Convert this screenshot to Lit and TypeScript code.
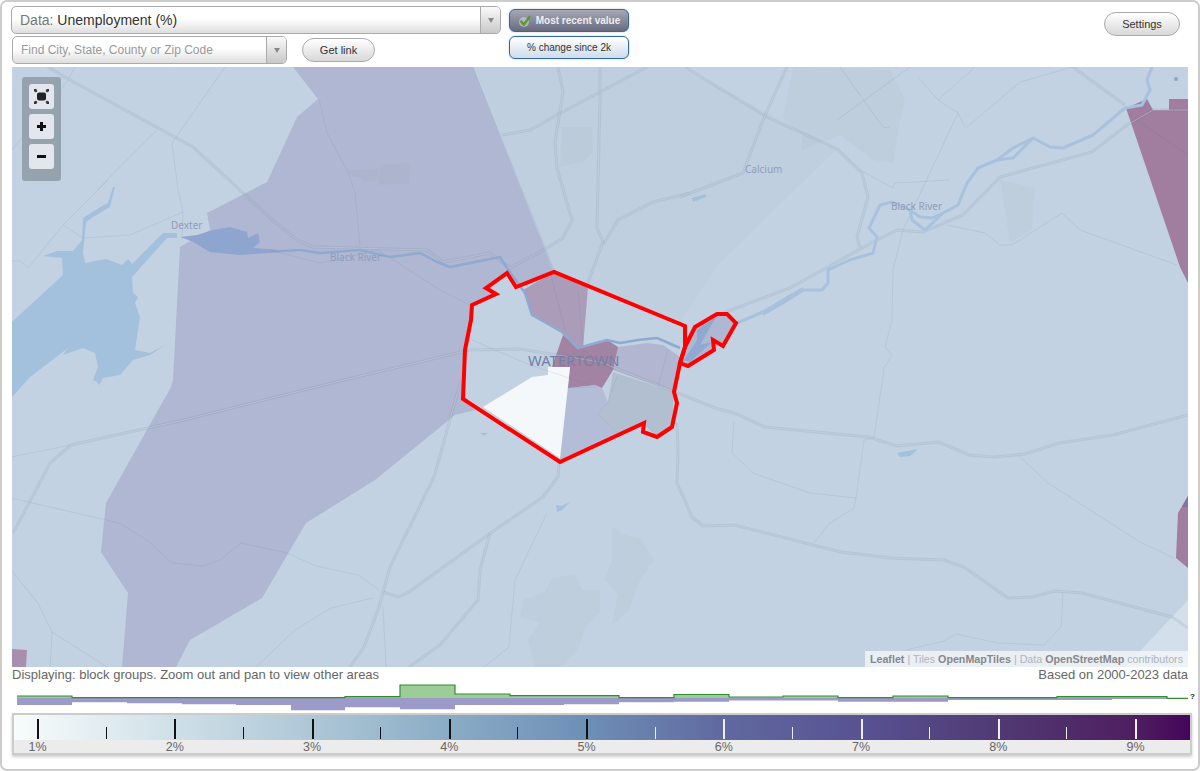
import { LitElement, html, css, svg } from "lit";
import { customElement } from "lit/decorators.js";

// map shapes are in page pixels, the svg viewBox is the map rectangle on the page
const ROADS = [
  "13,533 27,507 50,463 71,445 184,420 344,380 470,350 520,349 600,362 675,392 715,408 734,413 765,427 868,437 897,446 939,442 969,455 994,457 1025,454 1059,443 1113,435 1188,415",
  "559,463 558,477 543,497 492,532 409,592 398,597 383,592",
  "461,380 434,477 390,567 379,607 364,647 350,667",
  "490,533 480,570 478,600 440,645 409,667",
  "677,423 678,450 677,483 692,517 703,526 734,525 841,552 891,558 944,560 964,567 1008,598 1032,597 1055,591 1082,593 1172,617 1188,628",
  "685,67 767,117 837,149 862,173 868,197 857,237 860,247",
  "1073,67 1125,105",
  "723,313 790,288 873,242 897,230 923,232 963,215 1000,177 1092,152 1127,125 1153,110 1188,110",
  "680,197 743,173 763,120 787,67",
  "48,67 70,80 193,147 240,190 270,218 297,240 313,247 427,250 443,262 490,253 510,268 547,248 563,238 572,220 557,168 555,142 563,92 558,67",
  "600,67 600,98 597,228 603,242 587,285",
  "647,67 557,115 530,130 502,135",
  "690,193 653,202 618,220 603,245",
];

const THIN = [
  "11,457 71,445",
  "11,498 119,523 147,540 172,563 203,566 220,560 241,543 287,553 316,566 358,575 379,590",
  "373,598 331,608 295,630 256,667",
  "11,570 38,603 52,632 50,667",
  "52,632 107,667",
  "383,607 386,667",
  "547,513 515,580 509,647 484,667",
  "884,370 874,437 864,440 856,498 854,508 830,523 814,543",
  "734,422 732,453 753,473 810,493 856,498",
  "1019,456 1048,483 1140,542 1174,558",
  "1063,593 1061,627 1044,645 998,643 956,634 944,641 906,650",
  "837,120 910,67",
  "840,67 883,127 890,128",
  "918,77 938,100 958,113 965,127",
  "975,67 938,100",
  "958,113 903,230 893,270 892,320 885,347 892,355 883,370",
  "967,127 1020,82 1073,67",
  "860,170 893,188 895,183 950,180",
  "1127,113 1188,155",
  "947,225 985,233 1000,245 1012,245 1062,213 1080,230 1177,265",
  "319,99 327,133 348,172 355,192 360,245",
  "270,250 320,263 378,250 440,290 472,306",
  "473,67 555,272",
  "12,150 68,80 75,67",
  "225,67 172,143 178,190 183,212 182,240",
  "157,130 97,190",
  "12,261 20,261 28,268 63,225 108,180",
  "63,225 83,238 130,235 183,212",
  "472,340 530,365 590,385",
  "618,433 598,414 608,402 617,377",
  "658,386 668,350",
  "583,348 578,290",
  "568,388 597,387",
  "578,347 613,370",
  "550,272 566,333",
];

const LANDUSE = [
  "793,67 783,118 802,135 802,150 840,135 873,160 893,163 900,120 905,100 890,70",
  "1000,180 1035,188 1032,230 1010,243",
  "380,165 410,163 410,183 378,185",
  "348,170 378,169 377,180 363,182 363,177 353,177",
  "562,127 592,127 593,152 583,162 560,167",
  "523,600 545,592 552,578 575,575 582,590 600,590 600,612 585,628 578,650 560,667 535,667 528,640 540,622 520,618",
  "612,526 625,535 640,538 654,560 640,580 628,612 612,625 618,595 604,580 612,560",
];

const RIVERS = [
  "737,323 763,312 787,298 803,290 822,290 828,283 828,270 850,260 873,253 877,237 869,228 880,205 892,202 910,210 920,217 932,218 943,213 958,205 967,183 978,168 997,160 1013,148 1033,138 1050,147 1063,148 1093,135 1125,108 1142,105 1150,90 1147,80 1152,67",
  "910,210 912,220 925,230 943,213",
  "997,160 1013,158 1033,138",
];

const RIVER_OVER_DISTRICT =
  "300,250 320,253 360,250 390,257 420,253 437,262 450,267 500,257 507,268 525,293 532,315 562,332 578,348 607,340 620,343 638,340 657,338 680,348";

const HIST = [
  { to: 72, top: 696, low: 705 },
  { to: 127, top: 697.7, low: 702.3 },
  { to: 182, top: 697.7, low: 703.3 },
  { to: 236, top: 697.7, low: 704.3 },
  { to: 291, top: 697.7, low: 705 },
  { to: 345, top: 697.7, low: 710.3 },
  { to: 400, top: 696.7, low: 707.3 },
  { to: 455, top: 685, low: 709.3 },
  { to: 510, top: 694, low: 705 },
  { to: 564, top: 695.7, low: 705 },
  { to: 619, top: 695.7, low: 704.3 },
  { to: 674, top: 697.7, low: 702.3 },
  { to: 729, top: 694.5, low: 701.7 },
  { to: 783, top: 697, low: 700.5 },
  { to: 838, top: 696, low: 700.5 },
  { to: 893, top: 697.7, low: 701.7 },
  { to: 948, top: 696, low: 701.7 },
  { to: 1057, top: 697.7, low: 700 },
  { to: 1112, top: 696.7, low: 700 },
  { to: 1167, top: 696.7, low: 699 },
  { to: 1188, top: 698.3, low: 699 },
];

const stepPath = (key: "top" | "low") => {
  let x = 17;
  let d = `M17 ${HIST[0][key]}`;
  for (const b of HIST) {
    d += ` L${x} ${b[key]} L${b.to} ${b[key]}`;
    x = b.to;
  }
  return d;
};

@customElement("app-root")
export class AppRoot extends LitElement {
  static styles = css`
    :host {
      display: block;
      width: 1200px;
      height: 771px;
      font-family: "Liberation Sans", Arial, sans-serif;
    }
    .frame {
      box-sizing: border-box;
      height: 771px;
      border: 2px solid #ccc;
      border-radius: 7px;
      padding: 0 10px;
      background: #fff;
      overflow: hidden;
    }
    .top {
      display: flex;
      height: 65px;
    }
    .left {
      display: flex;
      flex-direction: column;
      gap: 2px;
      width: 490px;
      margin: 4px 0 0 -1px;
    }
    .row {
      display: flex;
      align-items: center;
    }
    .select {
      display: flex;
      box-sizing: border-box;
      height: 28px;
      border: 1px solid #aaa;
      border-radius: 5px;
      background: linear-gradient(#fff 45%, #dedede);
      overflow: hidden;
    }
    .select .value {
      flex: 1;
      padding-left: 8px;
      line-height: 26px;
      font-size: 14px;
      color: #333;
      white-space: nowrap;
    }
    .select .value span {
      color: #777;
    }
    .select .caret {
      display: flex;
      align-items: center;
      justify-content: center;
      width: 19px;
      border-left: 1px solid #aaa;
      background: linear-gradient(#fafafa, #c8c8c8);
    }
    .caret i {
      width: 0;
      height: 0;
      border: 3px solid transparent;
      border-top: 5px solid #888;
      border-bottom: 0;
    }
    .find {
      width: 275px;
      margin-left: 1px;
    }
    .find .value {
      font-size: 12px;
      color: #999;
    }
    .pill {
      box-sizing: border-box;
      height: 24px;
      border: 1px solid #aaa;
      border-radius: 12px;
      background: linear-gradient(#fff, #d8d8d8);
      font: 11px/22px "Liberation Sans", Arial, sans-serif;
      color: #333;
      text-align: center;
      padding: 0;
    }
    .getlink {
      width: 73px;
      margin-left: 15px;
    }
    .toggles {
      display: flex;
      flex-direction: column;
      gap: 4px;
      margin: 7px 0 0 8px;
    }
    .toggle {
      display: flex;
      align-items: center;
      justify-content: center;
      box-sizing: border-box;
      width: 120px;
      height: 23px;
      border: 1px solid #2f69a8;
      border-radius: 6px;
      box-shadow: 0 0 2px #bbb;
      font-size: 10px;
      white-space: nowrap;
    }
    .toggle.on {
      gap: 4px;
      background: linear-gradient(#a6a8b4, #666b80);
      color: #eee;
      font-weight: bold;
    }
    .toggle.off {
      background: linear-gradient(#fff, #cfdcea);
      color: #333;
    }
    .settings {
      width: 76px;
      margin: 10px 8px 0 auto;
    }
    .map {
      position: relative;
      height: 600px;
      background: #c2d2e2;
      overflow: hidden;
    }
    .map > svg {
      display: block;
    }
    .road-a {
      fill: none;
      stroke: rgba(100, 125, 150, 0.15);
      stroke-width: 3;
    }
    .road-b {
      fill: none;
      stroke: rgba(205, 218, 232, 0.4);
      stroke-width: 1;
    }
    .thin {
      fill: none;
      stroke: rgba(90, 115, 140, 0.12);
      stroke-width: 1;
    }
    .land {
      fill: rgba(120, 135, 145, 0.05);
    }
    .river {
      fill: none;
      stroke: #a8c2de;
      stroke-width: 3;
      stroke-linejoin: round;
    }
    .river.over {
      stroke: #8fa9d0;
      stroke-width: 2.5;
    }
    .place {
      font-family: "Noto Sans", "Open Sans", sans-serif;
      font-size: 10px;
      fill: #8f9dbc;
    }
    .city {
      font-family: "Noto Sans", "Open Sans", sans-serif;
      font-size: 14.8px;
      fill: #7380a8;
    }
    .outline {
      fill: none;
      stroke: #f00;
      stroke-width: 4;
      stroke-linejoin: miter;
    }
    .zoom {
      position: absolute;
      left: 10px;
      top: 10px;
      display: flex;
      flex-direction: column;
      gap: 5px;
      padding: 7px 7px 12px;
      border-radius: 3px;
      background: #95a3ae;
    }
    .zoom div {
      display: flex;
      align-items: center;
      justify-content: center;
      width: 25px;
      height: 25px;
      border-radius: 3px;
      background: #e3e6ec;
    }
    .attribution {
      position: absolute;
      right: 0;
      bottom: 0;
      padding: 0 5px 0 5px;
      height: 16px;
      line-height: 16px;
      background: rgba(240, 244, 248, 0.85);
      font-size: 10.7px;
      color: #b0b4b8;
      white-space: nowrap;
    }
    .attribution b {
      color: #888;
    }
    .info {
      display: flex;
      justify-content: space-between;
      height: 16px;
      line-height: 16px;
      font-size: 13px;
      color: #666;
    }
    .hist {
      display: block;
      width: 1180px;
      height: 30px;
      overflow: visible;
    }
    .legend {
      box-sizing: border-box;
      width: 1180px;
      height: 42px;
      border: 2px solid #ccc;
      box-shadow: 0 2px 3px #ccc;
      background: #ececec;
    }
    .bar {
      display: grid;
      grid-template-columns: repeat(17, 68.63px);
      align-items: end;
      box-sizing: border-box;
      height: 25px;
      padding: 0 0 1px 23px;
      background: linear-gradient(
        90deg,
        #f8fcfc 0%,
        #cfe0e8 13.6%,
        #aec7d7 25.3%,
        #8aacc6 37%,
        #6e8fb6 48.7%,
        #60699f 60.3%,
        #585293 72%,
        #503a74 83.7%,
        #4f1f60 95%,
        #45055a 100%
      );
    }
    .tick {
      background: #111;
    }
    .tick.major {
      width: 2px;
      height: 20px;
    }
    .tick.minor {
      width: 1px;
      height: 12px;
    }
    .tick.light {
      background: #eee;
    }
    .labels {
      display: grid;
      grid-template-columns: repeat(9, 137.25px);
      padding-left: 23.5px;
      height: 13px;
      line-height: 14px;
      font-size: 12.5px;
      color: #666;
    }
    .labels span {
      display: flex;
      justify-content: center;
      width: 0;
    }
  `;

  renderMap() {
    return html`
      <svg width="1176" height="600" viewBox="12 67 1176 600">
        <polygon fill="#bfcfdf" points="475,67 680,67 837,149 720,263 680,322 554,272" />
        <polygon fill="#d3e0ec" points="1188,600 1125,667 1188,667" />
        <polygon
          fill="#b0b7d2"
          points="293,67 318,99 297,117 267,182 207,213 210,230 180,247 173,380 171,387 106,503 101,552 128,593 122,667 176,667 190,640 262,598 306,523 375,480 455,415 475,410 463,399 465,350 471,320 472,305 496,294 486,288 507,273 516,287 554,272 473,67"
        />
        <polygon fill="#a98fae" points="12,649 27,650 26,667 12,667" />
        <polygon
          fill="#a17da0"
          points="1126,108 1147,99 1153,110 1169,110 1169,99 1188,99 1188,283 1180,267"
        />
        <polygon fill="#a17da0" points="1188,496 1178,513 1176,558 1188,568" />
        <polygon fill="#7d76aa" points="1188,496 1182,507 1188,507" />
        <polygon fill="#ab9cb9" points="523,290 554,272 588,287 583,348 578,347 563,332 532,315" />
        <polygon fill="#b2b6d0" points="607,340 618,347 647,343 663,345 680,357 674,392 658,386 613,370" />
        <polygon fill="#b2bfd1" points="613,372 674,392 672,425 657,437 643,423 618,433 598,414 608,402" />
        <polygon fill="#b4bdd7" points="568,388 595,385 602,388 608,402 598,414 618,433 644,423 560,460" />
        <polygon
          fill="#a283a3"
          points="563,335 578,347 607,340 618,347 613,370 602,388 595,385 568,388 570,367 552,367"
        />
        <polygon fill="#f4f8fa" points="483,407 532,377 548,375 548,367 570,367 560,458" />
        <polygon fill="#b0b7d2" points="685,347 695,327 717,314 727,314 736,323 723,346 713,340 714,350 688,366 680,363" />
        <polygon fill="#90a9d0" points="684,360 697,340 697,330 716,317 700,345 712,342 690,362" />
        <polygon fill="#a3c0dc" points="897,453 918,449 910,456 900,457" />
        <polygon fill="#a3c0dc" points="692,198 706,194 706,197 693,202" />
        <polygon fill="#a3c0dc" points="556,505 562,506 570,502 562,510 557,512" />
        <polygon fill="#a3c0dc" points="480,433 488,433 484,436" />
        <polygon fill="#a3c0dc" points="95,380 102,380 99,385" />
        <polygon
          fill="#a3c0dc"
          points="12,322 63,275 62,258 43,256 57,251 73,251 82,240 83,218 102,206 108,203 113,187 115,187 110,207 93,217 86,222 83,252 85,263 106,259 122,265 128,259 132,264 163,233 177,233 177,238 167,238 132,277 133,293 138,297 135,303 140,317 135,350 150,353 165,345 150,355 133,360 120,375 103,378 100,383 93,380 98,367 95,353 83,348 63,355 68,348 30,377 12,397"
        />
        <polygon
          fill="#8ea6cf"
          points="181,237 197,235 213,230 230,227 247,232 248,238 258,233 260,242 253,248 280,250 300,249 300,251 240,255 210,252 193,242"
        />
        <polygon fill="#a5c0dd" points="763,311 787,296 803,287 803,292 787,302 763,316" />
        ${LANDUSE.map((p) => svg`<polygon class="land" points=${p} />`)}
        ${THIN.map((p) => svg`<polyline class="thin" points=${p} />`)}
        ${ROADS.map((p) => svg`<polyline class="road-a" points=${p} />`)}
        ${ROADS.map((p) => svg`<polyline class="road-b" points=${p} />`)}
        ${RIVERS.map((p) => svg`<polyline class="river" points=${p} />`)}
        <polyline class="river over" points=${RIVER_OVER_DISTRICT} />
        <circle cx="1176" cy="79" r="2" fill="#94a4b8" />
        <text class="place" x="171" y="229">Dexter</text>
        <text class="place" x="330" y="261">Black River</text>
        <text class="place" x="745" y="173">Calcium</text>
        <text class="place" x="891" y="210">Black River</text>
        <text class="city" x="528" y="366">WATERTOWN</text>
        <polygon
          class="outline"
          points="507,273 516,287 554,272 685,326 685,347 680,363 674,392 677,403 672,427 657,437 643,432 644,423 560,462 463,399 465,350 471,320 472,305 496,294 486,288"
        />
        <polygon
          class="outline"
          points="685,347 695,327 717,314 727,314 736,323 723,346 713,340 714,350 688,366 680,363"
        />
      </svg>
      <div class="zoom">
        <div>
          <svg width="15" height="15" viewBox="0 0 15 15">
            <rect x="3" y="3.500" width="9" height="8" rx="2" fill="#222" />
            <path
              d="M0 0h3L2.300 .7 3.500 1.900 1.900 3.500 .7 2.300 0 3zM15 0v3L14.300 2.300 13.100 3.500 11.500 1.900 12.700 .7 12 0zM0 15v-3l.7.7 1.200-1.200 1.600 1.600-1.200 1.200L3 15zM15 15h-3l.7-.7-1.200-1.200 1.600-1.600 1.200 1.200.7-.7z"
              fill="#333"
            />
          </svg>
        </div>
        <div>
          <svg width="11" height="11" viewBox="0 0 11 11">
            <path d="M4 1h3v3h3v3H7v3H4V7H1V4h3z" fill="#111" />
          </svg>
        </div>
        <div>
          <svg width="11" height="11" viewBox="0 0 11 11">
            <rect x="1" y="4" width="9" height="3" fill="#111" />
          </svg>
        </div>
      </div>
      <div class="attribution">
        <b>Leaflet</b> | Tiles <b>OpenMapTiles</b> | Data <b>OpenStreetMap</b> contributors
      </div>
    `;
  }

  renderHist() {
    const top = stepPath("top");
    const low = stepPath("low");
    return html`
      <svg class="hist" viewBox="12 683 1180 30">
        <path d="${top} L1188 698 L17 698 Z" fill="#9ccc98" />
        <path d="${low} L1188 698 L17 698 Z" fill="#9c9ac8" />
        <path d=${top} fill="none" stroke="#2f8f2f" stroke-width="1.200" />
        <text x="1190" y="699" font-size="8" font-weight="bold" fill="#222">?</text>
      </svg>
    `;
  }

  renderLegend() {
    const ticks = Array.from({ length: 17 }, (_, i) => i);
    const labels = Array.from({ length: 9 }, (_, i) => `${i + 1}%`);
    return html`
      <div class="legend">
        <div class="bar">
          ${ticks.map(
            (i) => html`<div class="tick ${i % 2 ? "minor" : "major"} ${i >= 9 ? "light" : ""}"></div>`
          )}
        </div>
        <div class="labels">${labels.map((l) => html`<span>${l}</span>`)}</div>
      </div>
    `;
  }

  render() {
    return html`
      <div class="frame">
        <div class="top">
          <div class="left">
            <div class="select">
              <div class="value"><span>Data:</span> Unemployment (%)</div>
              <div class="caret"><i></i></div>
            </div>
            <div class="row">
              <div class="select find">
                <div class="value">Find City, State, County or Zip Code</div>
                <div class="caret"><i></i></div>
              </div>
              <button class="pill getlink">Get link</button>
            </div>
          </div>
          <div class="toggles">
            <div class="toggle on">
              <svg width="14" height="14" viewBox="0 0 14 14">
                <circle cx="6" cy="8" r="5" fill="#c9ccd2" opacity="0.7" />
                <path d="M1.500 7.500l2-1.500 2.200 2.500L11 1.500l2 1.500-7 9.500z" fill="#5f9a35" />
              </svg>
              Most recent value
            </div>
            <div class="toggle off">% change since 2k</div>
          </div>
          <button class="pill settings">Settings</button>
        </div>
        <div class="map">${this.renderMap()}</div>
        <div class="info">
          <span>Displaying: block groups. Zoom out and pan to view other areas</span>
          <span>Based on 2000-2023 data</span>
        </div>
        ${this.renderHist()} ${this.renderLegend()}
      </div>
    `;
  }
}
